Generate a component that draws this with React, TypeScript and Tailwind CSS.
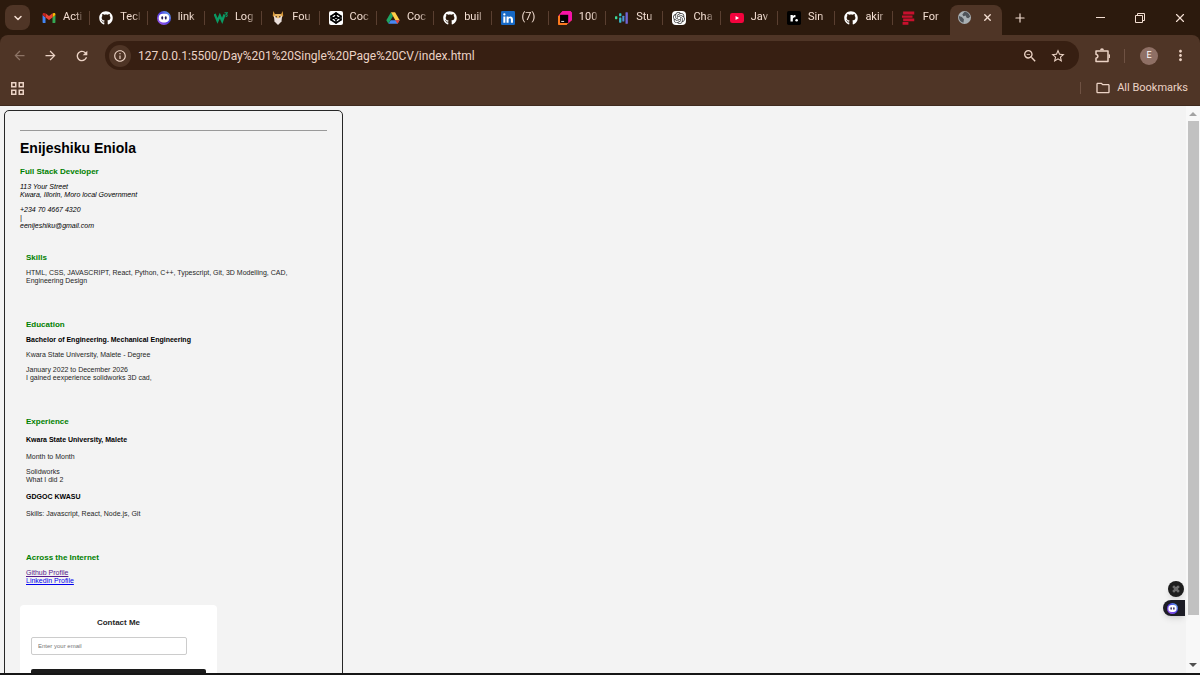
import React, { useState } from 'react';
import { FaGithub } from 'react-icons/fa';
import { SiOpenai } from 'react-icons/si';
import { MdArrowBack, MdArrowForward, MdRefresh, MdInfoOutline, MdZoomOut, MdStarBorder, MdMoreVert, MdOutlineFolder } from 'react-icons/md';
import { ChevronDown, Codepen, Command, Plus, X } from 'lucide-react';

const GmailIcon = () => (
  <svg viewBox="0 0 24 24" className="size-full">
    <path d="M2 20.5h4V11L1 7v12.3c0 .7.4 1.2 1 1.2z" fill="#4285f4" />
    <path d="M18 20.5h4c.6 0 1-.5 1-1.2V7l-5 4z" fill="#34a853" />
    <path d="M18 4.5V11l5-4V5.500c0-2-2.200-2.800-3.700-1.800z" fill="#fbbc04" />
    <path d="M6 11V4l6 4.600L18 4v7l-6 4.500z" fill="#ea4335" />
    <path d="M1 5.500V7l5 4V4.500l-1.300-.8C3.200 2.700 1 3.500 1 5.500z" fill="#c5221f" />
  </svg>
);

const BotIcon = () => (
  <svg viewBox="0 0 24 24" className="size-full">
    <defs>
      <linearGradient id="bot" x1="1" y1="0" x2="0" y2="1">
        <stop offset="0" stopColor="#6ec5f5" />
        <stop offset="0.45" stopColor="#4a3de0" />
        <stop offset="1" stopColor="#b05cf0" />
      </linearGradient>
    </defs>
    <circle cx="12" cy="12" r="12" fill="url(#bot)" />
    <rect x="3" y="4.500" width="18" height="15" rx="7" fill="#fff" />
    <rect x="7.500" y="9" width="3" height="5.500" rx="1.500" fill="#241a55" />
    <rect x="13.500" y="9" width="3" height="5.500" rx="1.500" fill="#241a55" />
  </svg>
);

const W3Icon = () => (
  <svg viewBox="0 0 24 24" className="size-full" fill="none" stroke="#0a9a63" strokeWidth="4">
    <path d="M1 5l5 12 4-9 4 9 4-11" />
    <path d="M18 3h5l-2.500 2.500c3 .5 3 4-.5 4.500" strokeWidth="1.800" />
  </svg>
);

const MascotIcon = () => (
  <svg viewBox="0 0 24 24" className="size-full">
    <path d="M4 0l3 6h10l3-6 1 8-3 4H6L3 8z" fill="#d99a3c" />
    <path d="M5 8h14l-1 10-6 6-6-6z" fill="#eadfda" />
    <path d="M7 5h10v5l-5 3-5-3z" fill="#e8b765" />
    <circle cx="9" cy="10" r="1.300" fill="#4a3020" />
    <circle cx="15" cy="10" r="1.300" fill="#4a3020" />
  </svg>
);

const CodepenIcon = () => (
  <span className="flex size-full items-center justify-center rounded-xs bg-white text-black">
    <Codepen size={12} strokeWidth={3} />
  </span>
);

const DriveIcon = () => (
  <svg viewBox="0 0 24 24" className="size-full">
    <path d="M8.500 2L.5 16l3.700 6L12 8.500z" fill="#1fa463" />
    <path d="M8.500 2h7l8 14h-7.500z" fill="#ffcf48" />
    <path d="M4.200 22l4-6h15.300l-3.700 6z" fill="#4688f4" />
    <path d="M23.500 16l-3.700 6-4-6z" fill="#ea4335" />
  </svg>
);

const LinkedinIcon = () => (
  <svg viewBox="0 0 24 24" className="size-full">
    <rect width="24" height="24" rx="2" fill="#1668c5" />
    <path d="M4 9.500h3.500V20H4zM9.500 9.500H13V11c2-2.700 7.500-2.200 7.500 3v6H17v-5.500c0-3-4-2.700-4 0V20H9.500z" fill="#fff" />
    <circle cx="5.750" cy="5.800" r="2" fill="#fff" />
  </svg>
);

const JetbrainsIcon = () => (
  <svg viewBox="0 0 24 24" className="size-full">
    <path d="M8 0h13l3 3v13l-7 6H1l-1-2V9z" fill="#f0267e" />
    <path d="M8 0h13l3 3v12l-7 3V7H2z" fill="#f512a8" />
    <path d="M0 9l4-2v13h13l-2 4H1l-1-1z" fill="#fc7a1e" />
    <rect x="3.500" y="6.500" width="14" height="14" fill="#000" />
    <rect x="5.500" y="17" width="5" height="1.500" fill="#fff" />
  </svg>
);

const BarsIcon = () => (
  <svg viewBox="0 0 24 24" className="size-full">
    <rect x="0" y="9" width="4" height="5" rx="1" fill="#3ddc97" />
    <rect x="7" y="4" width="4" height="5" rx="1" fill="#35c6c0" />
    <rect x="7" y="11" width="4" height="9" rx="1" fill="#37b8c8" />
    <rect x="12.500" y="8" width="3.500" height="10" rx="1" fill="#4b93d8" />
    <rect x="18" y="2" width="4" height="20" rx="1" fill="#7166d6" />
  </svg>
);

const OpenaiIcon = () => (
  <span className="flex size-full items-center justify-center rounded-sm bg-white text-neutral-700">
    <SiOpenai className="size-3" />
  </span>
);

const YoutubeIcon = () => (
  <svg viewBox="0 0 24 24" className="size-full">
    <rect y="3.500" width="24" height="17" rx="4" fill="#f4033d" />
    <path d="M9.500 8.500v7l6-3.500z" fill="#fff" />
  </svg>
);

const RoadmapIcon = () => (
  <svg viewBox="0 0 24 24" className="size-full">
    <rect width="24" height="24" rx="3" fill="#000" />
    <path d="M6 18V7h4v2c.8-1.500 2-2.200 4.500-2.200V10.500c-3 0-4.500.8-4.500 3.500v4z" fill="#fff" />
    <circle cx="16.500" cy="16" r="2.200" fill="#fff" />
  </svg>
);

const FormIcon = () => (
  <svg viewBox="0 0 24 24" className="size-full" fill="#c8102e">
    <path d="M2 1h19v5H2zM0 7.500h18v4H0zM2 13h19v4.500H2zM1 19h10v4.500H1z" />
  </svg>
);

const GlobeIcon = () => (
  <svg viewBox="0 0 24 24" className="size-full">
    <circle cx="12" cy="12" r="12" fill="#a9b0b4" />
    <path d="M12 1.500c5 0 9.500 4 10.300 9l-3.300 3-3-1-2-4-4 1-2-3z" fill="#4f545a" />
    <path d="M2 9l5 2 4 4-1 6.500C5.500 20.500 2 17 1.700 12z" fill="#4f545a" />
  </svg>
);

const PuzzleIcon = () => (
  <svg viewBox="0 0 16 16" className="size-4" fill="none" stroke="currentColor" strokeWidth="1.500" strokeLinejoin="round">
    <path d="M2 3h12v10.500H2v-3.200c2.600-.6 2.600-3.500 0-4.100z" />
    <path d="M6.800 2.200a1.200 1.200 0 0 1 2.400 0M14.700 7a1.200 1.200 0 0 1 0 2.400" />
  </svg>
);

const tabs = [
  { title: 'Acti', icon: <GmailIcon /> },
  { title: 'Tecl', icon: <FaGithub className="size-full text-white" /> },
  { title: 'link', icon: <BotIcon /> },
  { title: 'Log', icon: <W3Icon /> },
  { title: 'Fou', icon: <MascotIcon /> },
  { title: 'Coc', icon: <CodepenIcon /> },
  { title: 'Coc', icon: <DriveIcon /> },
  { title: 'buil', icon: <FaGithub className="size-full text-white" /> },
  { title: '(7)', icon: <LinkedinIcon /> },
  { title: '100', icon: <JetbrainsIcon /> },
  { title: 'Stu', icon: <BarsIcon /> },
  { title: 'Cha', icon: <OpenaiIcon /> },
  { title: 'Jav', icon: <YoutubeIcon /> },
  { title: 'Sin', icon: <RoadmapIcon /> },
  { title: 'akir', icon: <FaGithub className="size-full text-white" /> },
  { title: 'For', icon: <FormIcon /> },
];

function TabStrip() {
  return (
    <div className="flex h-[35px] bg-[#2c1a0d] text-[#f3ded2]">
      <div className="flex w-[33px] shrink-0 items-center pl-[5px]">
        <button aria-label="Search tabs" className="flex size-[25px] items-center justify-center rounded-lg bg-[#4f3526]">
          <ChevronDown size={12} strokeWidth={3} />
        </button>
      </div>
      <div className="flex min-w-0 flex-1">
        {tabs.map((tab, i) => (
          <button key={i} className="flex min-w-0 flex-1 items-center pl-[9px]">
            <span className="size-[14px] shrink-0">{tab.icon}</span>
            <span className="ml-[7px] min-w-0 flex-1 overflow-hidden text-left text-[11px] whitespace-nowrap [mask-image:linear-gradient(to_right,black_60%,transparent)]">
              {tab.title}
            </span>
            <span className={i === tabs.length - 1 ? 'ml-[5px] w-px' : 'ml-[5px] h-[14px] w-px bg-[#5a3f30]'} />
          </button>
        ))}
      </div>
      <div className="flex w-[250px] shrink-0">
        <div className="mt-[5px] flex w-[52px] items-center justify-between rounded-t-lg bg-[#4f3526] pr-[9px] pb-[5px] pl-2">
          <span className="size-[13px]"><GlobeIcon /></span>
          <button aria-label="Close tab"><X size={11} strokeWidth={3} /></button>
        </div>
        <button aria-label="New tab" className="ml-[11px]"><Plus size={14} strokeWidth={2} /></button>
        <div className="ml-auto flex items-center">
          <button aria-label="Minimize" className="flex w-10 justify-center"><span className="h-px w-[9px] bg-[#f3ded2]" /></button>
          <button aria-label="Restore" className="flex w-10 justify-center">
            <svg viewBox="0 0 10 10" className="size-[10px]" fill="none" stroke="currentColor">
              <path d="M.5 2.500h7v7h-7zM2.500 2.500v-2h7v7h-2" />
            </svg>
          </button>
          <button aria-label="Close" className="flex w-10 justify-center"><X size={14} strokeWidth={2} /></button>
        </div>
      </div>
    </div>
  );
}

function Toolbar() {
  const [url, setUrl] = useState('127.0.0.1:5500/Day%201%20Single%20Page%20CV/index.html');

  return (
    <div className="bg-[#2c1a0d]">
      <div className="h-[71px] rounded-t-lg border-b border-[#3f2a1e] bg-[#4f3526] text-[#ecd3c5]">
        <div className="flex h-[41px] items-center">
          <button aria-label="Back" className="ml-3 text-[#8d7466]"><MdArrowBack size={15} /></button>
          <button aria-label="Forward" className="ml-4"><MdArrowForward size={15} /></button>
          <button aria-label="Reload" className="ml-4"><MdRefresh size={16} /></button>
          <div className="ml-[15px] flex h-[29px] flex-1 items-center rounded-full bg-[#371f12] px-1">
            <button aria-label="Site information" className="flex size-[22px] items-center justify-center rounded-full bg-[#4f3526]">
              <MdInfoOutline size={14} />
            </button>
            <input
              aria-label="Address"
              value={url}
              onChange={(e) => setUrl(e.target.value)}
              className="ml-[7px] min-w-0 flex-1 bg-transparent text-[12px] outline-none"
            />
            <button aria-label="Zoom"><MdZoomOut size={16} /></button>
            <button aria-label="Bookmark this page" className="mr-[9px] ml-3"><MdStarBorder size={16} /></button>
          </div>
          <button aria-label="Extensions" className="ml-[15px]"><PuzzleIcon /></button>
          <span className="ml-[14px] h-[14px] w-px bg-[#6f5243]" />
          <button aria-label="Profile" className="ml-[15px] flex size-[18px] items-center justify-center rounded-full bg-[#8f7065] text-[9px] text-white">E</button>
          <button aria-label="Menu" className="mr-[11px] ml-[14px]"><MdMoreVert size={17} /></button>
        </div>
        <div className="flex h-6 items-center pr-3 pl-[11px]">
          <button aria-label="Apps">
            <svg viewBox="0 0 13 13" className="size-[13px]" fill="none" stroke="currentColor" strokeWidth="1.500">
              <path d="M.75.75h4v4h-4zM8.250.75h4v4h-4zM.75 8.250h4v4h-4zM8.250 8.250h4v4h-4z" />
            </svg>
          </button>
          <span className="ml-auto h-3 w-px bg-[#6f5243]" />
          <button className="ml-[14px] flex items-center gap-[6px] text-[11px]">
            <MdOutlineFolder size={16} />
            All Bookmarks
          </button>
        </div>
      </div>
    </div>
  );
}

const Heading = ({ children }: { children: React.ReactNode }) => (
  <h2 className="text-[8px] leading-[10px] font-bold text-[#008000]">{children}</h2>
);

function Resume() {
  return (
    <article className="mx-1 mt-1 w-[339px] rounded-[5px] border border-neutral-800 px-[15px] pt-[19px] text-[7px] leading-[8px] text-neutral-800">
      <hr className="border-[#999]" />
      <header className="text-black">
        <h1 className="mt-2 text-[14px] leading-[18px] font-bold">Enijeshiku Eniola</h1>
        <div className="mt-[10px]"><Heading>Full Stack Developer</Heading></div>
        <address className="mt-[6px]">
          <p>113 Your Street<br />Kwara, Illorin, Moro local Government</p>
          <p className="mt-[7px]">+234 70 4667 4320<br />|<br />eenijeshiku@gmail.com</p>
        </address>
      </header>

      <section className="mt-[23px] px-[6px]">
        <Heading>Skills</Heading>
        <p className="mt-[6px] max-w-[280px]">
          HTML, CSS, JAVASCRIPT, React, Python, C++, Typescript, Git, 3D Modelling, CAD, Engineering Design
        </p>
      </section>

      <section className="mt-[35px] px-[6px]">
        <Heading>Education</Heading>
        <h3 className="mt-[6px] font-bold text-black">Bachelor of Engineering. Mechanical Engineering</h3>
        <p className="mt-[7px]">Kwara State University, Malete - Degree</p>
        <p className="mt-[7px]">January 2022 to December 2026<br />I gained eexperience solidworks 3D cad,</p>
      </section>

      <section className="mt-[35px] px-[6px]">
        <Heading>Experience</Heading>
        <h3 className="mt-[9px] font-bold text-black">Kwara State University, Malete</h3>
        <p className="mt-[9px]">Month to Month</p>
        <p className="mt-[7px]">Solidworks<br />What I did 2</p>
        <h3 className="mt-[9px] font-bold text-black">GDGOC KWASU</h3>
        <p className="mt-[9px]">Skills: Javascript, React, Node.js, Git</p>
      </section>

      <section className="mt-[35px] px-[6px]">
        <Heading>Across the Internet</Heading>
        <p className="mt-[6px]">
          <a href="#" className="text-[#551a8b] underline">Github Profile</a><br />
          <a href="#" className="text-[#0000ee] underline">Linkedin Profile</a>
        </p>
      </section>

      <form className="mt-5 w-[197px] rounded-sm bg-white px-[11px] pt-[13px] pb-3" onSubmit={(e) => e.preventDefault()}>
        <h2 className="text-center text-[8px] leading-[10px] font-bold">Contact Me</h2>
        <input
          type="email"
          aria-label="Email"
          placeholder="Enter your email"
          className="mt-[9px] block h-[18px] w-[156px] rounded-xs border border-[#ccc] px-[6px] text-[6px] outline-none placeholder:text-[#757575]"
        />
        <button aria-label="Send" className="mt-[14px] block h-4 w-full rounded-xs bg-[#1c1c1c]" />
      </form>
    </article>
  );
}

export default function App() {
  return (
    <div className="relative flex h-screen flex-col overflow-hidden bg-[#f3f3f3] font-[Roboto,sans-serif]">
      <TabStrip />
      <Toolbar />
      <div className="flex min-h-0 flex-1">
        <main className="min-w-0 flex-1 overflow-hidden font-['Liberation_Sans',Arial,sans-serif]">
          <Resume />
        </main>
        <div className="flex w-[14px] flex-col items-center bg-[#f8f8f8] py-[6px]">
          <span className="border-x-4 border-b-4 border-x-transparent border-b-[#a3a3a3]" />
          <span className="mt-[5px] h-[494px] w-[11px] bg-[#c1c1c1]" />
          <span className="mt-auto border-x-4 border-t-4 border-x-transparent border-t-[#505050]" />
        </div>
      </div>
      <div className="h-[2px] shrink-0 bg-[#161616]" />

      {/* floating assistant buttons */}
      <div className="absolute right-[15px] bottom-[59px] flex flex-col items-end gap-[3px]">
        <button aria-label="Shortcuts" className="mr-px flex size-4 items-center justify-center rounded-full bg-[#1d1d1d] text-[#aaa] shadow-md">
          <Command size={8} />
        </button>
        <button aria-label="Assistant" className="flex h-4 w-[22px] items-center rounded-l-full bg-[#1d1d26] pl-1 shadow-md">
          <span className="size-[11px]"><BotIcon /></span>
        </button>
      </div>
    </div>
  );
}
